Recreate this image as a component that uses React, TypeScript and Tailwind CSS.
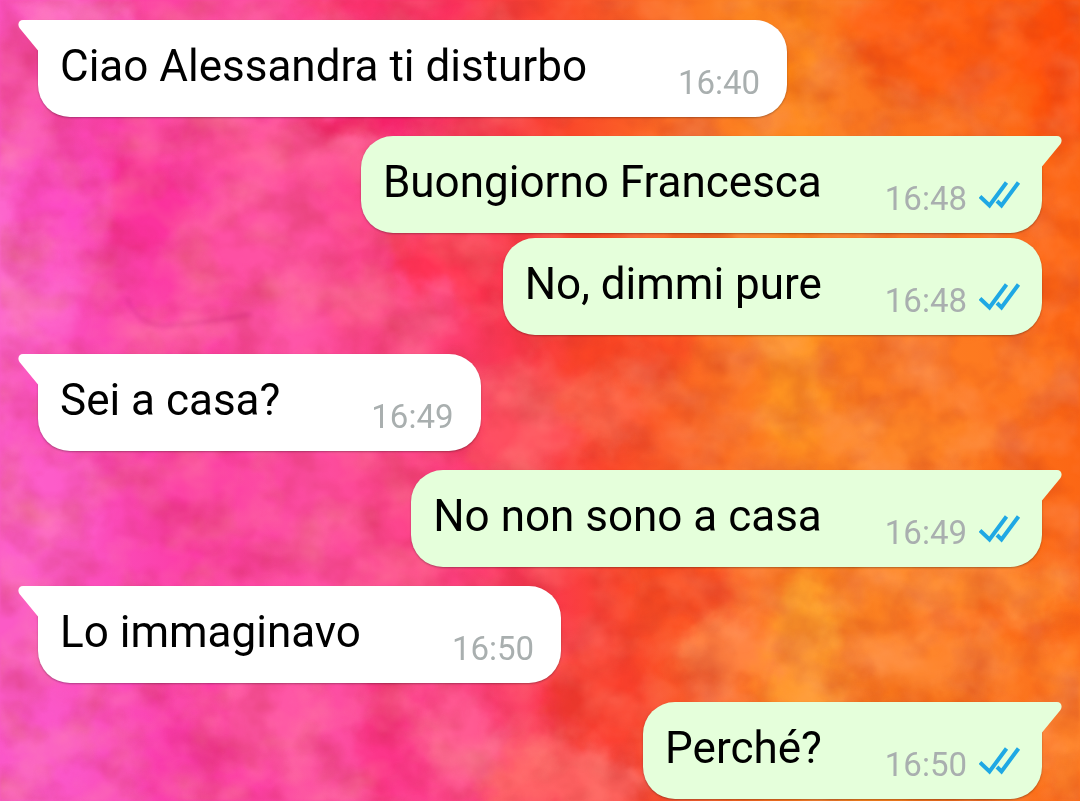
import { clsx } from 'clsx';

interface Message {
  id: number;
  text: string;
  time: string;
  outgoing: boolean;
}

const messages: Message[] = [
  { id: 1, text: 'Ciao Alessandra ti disturbo', time: '16:40', outgoing: false },
  { id: 2, text: 'Buongiorno Francesca', time: '16:48', outgoing: true },
  { id: 3, text: 'No, dimmi pure', time: '16:48', outgoing: true },
  { id: 4, text: 'Sei a casa?', time: '16:49', outgoing: false },
  { id: 5, text: 'No non sono a casa', time: '16:49', outgoing: true },
  { id: 6, text: 'Lo immaginavo', time: '16:50', outgoing: false },
  { id: 7, text: 'Perché?', time: '16:50', outgoing: true },
];

// cx, cy, rx, ry, colour, opacity
const blobs: [number, number, number, number, string, number][] = [
  [20, 260, 60, 90, '#ff78d8', 0.5],
  [75, 20, 60, 22, '#ff7fce', 0.7],
  [20, 70, 50, 50, '#f94fae', 0.7],
  [50, 520, 50, 70, '#ff62ce', 0.6],
  [60, 215, 40, 60, '#fc48c6', 0.8],
  [45, 750, 50, 40, '#fb55cb', 0.7],
  [225, 330, 110, 20, '#ff5cae', 0.6],
  [290, 145, 90, 30, '#ff569c', 0.8],
  [260, 240, 70, 55, '#ff56a4', 0.6],
  [170, 760, 20, 60, '#f836a8', 0.7],
  [270, 720, 50, 50, '#ff62a6', 0.6],
  [388, 740, 28, 80, '#fb2f86', 0.8],
  [460, 740, 35, 60, '#ff6096', 0.8],
  [370, 120, 70, 12, '#f0145c', 0.9],
  [390, 8, 90, 14, '#fa2a62', 0.8],
  [450, 265, 55, 45, '#ff2f4c', 0.8],
  [400, 310, 60, 28, '#ff5690', 0.7],
  [520, 430, 45, 50, '#ff5864', 0.7],
  [600, 410, 50, 30, '#ff6a4c', 0.7],
  [690, 590, 45, 50, '#fb4c22', 0.8],
  [600, 700, 55, 40, '#fb402c', 0.8],
  [565, 780, 80, 40, '#ff6d68', 0.8],
  [625, 350, 70, 25, '#fb4424', 0.7],
  [790, 380, 30, 70, '#ff9a22', 0.8],
  [810, 615, 35, 30, '#ffaa30', 0.9],
  [800, 670, 35, 60, '#ffa02a', 0.8],
  [730, 650, 45, 40, '#ff8a48', 0.8],
  [970, 370, 110, 45, '#ff8024', 0.6],
  [900, 440, 90, 30, '#ff8d2c', 0.6],
  [970, 590, 110, 30, '#ff9030', 0.8],
  [980, 620, 80, 8, '#fb6210', 0.8],
  [940, 660, 90, 35, '#ff8a30', 0.7],
  [900, 692, 80, 12, '#ee6410', 0.6],
  [800, 80, 20, 90, '#ff8a10', 0.7],
  [960, 40, 110, 60, '#ff5a0c', 0.8],
  [1062, 60, 30, 90, '#ff4806', 0.7],
  [1060, 260, 30, 80, '#ff6a14', 0.7],
  [1065, 720, 30, 80, '#ff8a2c', 0.8],
];

function Wallpaper() {
  return (
    <svg
      className="absolute inset-0 h-full w-full"
      viewBox="0 0 1080 801"
      preserveAspectRatio="none"
      aria-hidden="true"
    >
      <defs>
        <linearGradient id="wash" gradientUnits="userSpaceOnUse" x1="0" y1="400" x2="1060" y2="270">
          <stop offset="0" stopColor="#fb5ac6" />
          <stop offset="0.08" stopColor="#fb4cba" />
          <stop offset="0.16" stopColor="#fc3ca6" />
          <stop offset="0.28" stopColor="#fd4ea2" />
          <stop offset="0.4" stopColor="#fd4082" />
          <stop offset="0.48" stopColor="#fb3850" />
          <stop offset="0.56" stopColor="#fa482a" />
          <stop offset="0.65" stopColor="#fc6c24" />
          <stop offset="0.74" stopColor="#fc8620" />
          <stop offset="0.84" stopColor="#fb7820" />
          <stop offset="1" stopColor="#fc6614" />
        </linearGradient>
        <filter id="paint" x="-10%" y="-10%" width="120%" height="120%" colorInterpolationFilters="sRGB">
          <feGaussianBlur stdDeviation="10" result="soft" />
          <feTurbulence type="fractalNoise" baseFrequency="0.022" numOctaves="4" seed="7" />
          <feDisplacementMap in="soft" scale="50" xChannelSelector="R" yChannelSelector="G" />
        </filter>
        <filter id="dark" x="0" y="0" width="100%" height="100%" colorInterpolationFilters="sRGB">
          <feTurbulence type="fractalNoise" baseFrequency="0.022 0.026" numOctaves="4" seed="3" />
          <feColorMatrix values="0 0 0 0 0.7  0 0 0 0 0.12  0 0 0 0 0.12  1 0 0 0 -0.4" />
          <feGaussianBlur stdDeviation="1.5" />
        </filter>
        <filter id="light" x="0" y="0" width="100%" height="100%" colorInterpolationFilters="sRGB">
          <feTurbulence type="fractalNoise" baseFrequency="0.018 0.022" numOctaves="4" seed="12" />
          <feColorMatrix values="0 0 0 0 1  0 0 0 0 0.7  0 0 0 0 0.6  0 1 0 0 -0.4" />
          <feGaussianBlur stdDeviation="1.5" />
        </filter>
      </defs>
      <rect width="1080" height="801" fill="url(#wash)" />
      <g filter="url(#paint)">
        {blobs.map(([cx, cy, rx, ry, fill, opacity], i) => (
          <ellipse key={i} cx={cx} cy={cy} rx={rx} ry={ry} fill={fill} opacity={opacity} />
        ))}
      </g>
      <path d="M115 158l42-2 38 58-50 40-35-10z" fill="#fb2c98" opacity="0.6" className="blur-[3px]" />
      <path
        d="M127 298q10 26 36 28q44-3 88-12"
        fill="none"
        stroke="#dc2f92"
        strokeWidth="4"
        opacity="0.55"
        className="blur-[2px]"
      />
      <rect width="1080" height="801" filter="url(#dark)" opacity="0.6" />
      <rect width="1080" height="801" filter="url(#light)" opacity="0.6" />
    </svg>
  );
}

function Tail({ outgoing }: { outgoing: boolean }) {
  return (
    <svg
      className={clsx(
        'absolute top-0 h-8 w-6',
        outgoing ? 'left-full -ml-1 -scale-x-100 text-[#e5ffdb]' : 'right-full -mr-1 text-white'
      )}
      viewBox="0 0 24 32"
      fill="currentColor"
      aria-hidden="true"
    >
      <path d="M24 0H5C1 0-1 4 1.500 8L20 30.500V32h4z" />
    </svg>
  );
}

function ReadTicks() {
  return (
    <svg
      className="mb-[6px] ml-3 h-7 w-[42px]"
      viewBox="0 0 42 28"
      fill="none"
      stroke="#1fa8e4"
      strokeWidth="4"
      role="img"
      aria-label="Letto"
    >
      <path d="M1 15.500L10.500 24.500L27.500 1.500" />
      <path d="M18 20L22.500 24.500L39.500 1.500" />
    </svg>
  );
}

function Bubble({ message, first }: { message: Message; first: boolean }) {
  const { text, time, outgoing } = message;

  return (
    <div
      className={clsx(
        'relative flex h-[97px] items-start rounded-[32px] pl-[22px] shadow-[0_1px_2px_rgba(0,0,0,0.3)]',
        outgoing ? 'bg-[#e5ffdb] pr-[21px]' : 'bg-white pr-[27px]',
        first && (outgoing ? 'rounded-tr-none' : 'rounded-tl-none')
      )}
    >
      {first && <Tail outgoing={outgoing} />}
      <p className="pt-5 text-[44px] leading-[52px] text-black">{text}</p>
      <div className={clsx('flex items-center', outgoing ? 'ml-[63px] pt-[42px]' : 'ml-[91px] pt-11')}>
        <time className={clsx('text-[33px] leading-[38px] text-[#a9afaf]', outgoing && 'pt-[2px]')}>{time}</time>
        {outgoing && <ReadTicks />}
      </div>
    </div>
  );
}

export default function App() {
  return (
    <main className="relative min-h-screen overflow-hidden bg-[#fd4a80] font-['Roboto',sans-serif]">
      <Wallpaper />
      <ol className="relative flex flex-col px-[38px] pt-5">
        {messages.map((message, i) => {
          const first = i === 0 || messages[i - 1].outgoing !== message.outgoing;
          return (
            <li
              key={message.id}
              className={clsx(
                'flex',
                message.outgoing ? 'justify-end' : 'justify-start',
                i > 0 && (first ? 'mt-[19px]' : 'mt-[5px]')
              )}
            >
              <Bubble message={message} first={first} />
            </li>
          );
        })}
      </ol>
    </main>
  );
}
